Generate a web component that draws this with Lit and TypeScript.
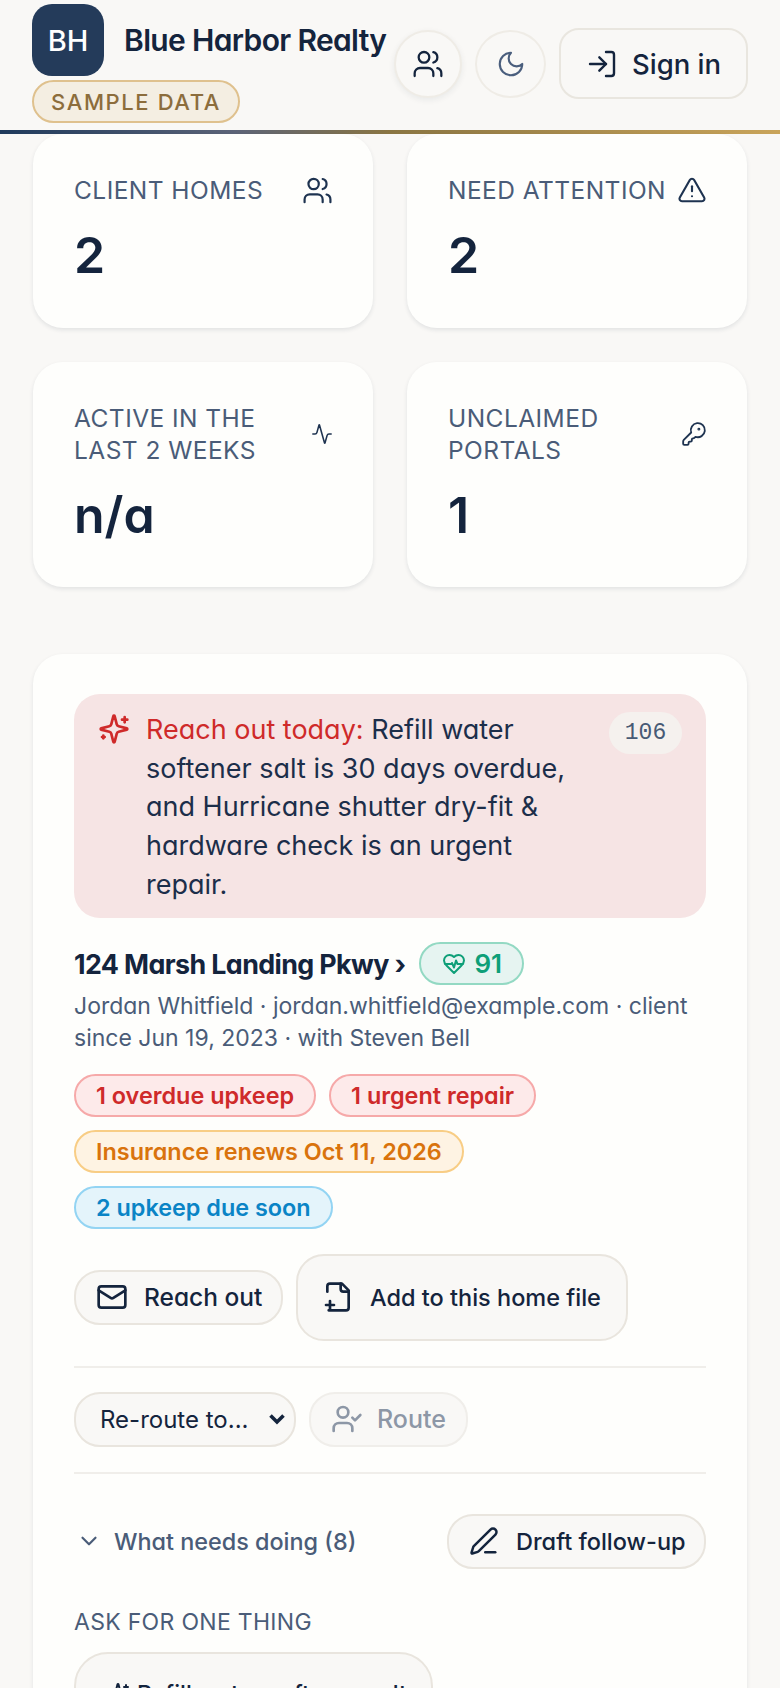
import {css, html, LitElement, svg} from 'lit'
import {customElement} from 'lit/decorators.js'

const icons: Record<string, unknown> = {
    users: svg`<path d="M16 21v-2a4 4 0 0 0-4-4H6a4 4 0 0 0-4 4v2"/><circle cx="9" cy="7" r="4"/><path d="M22 21v-2a4 4 0 0 0-3-3.87"/><path d="M16 3.13a4 4 0 0 1 0 7.75"/>`,
    moon: svg`<path d="M12 3a6 6 0 0 0 9 9 9 9 0 1 1-9-9Z"/>`,
    login: svg`<path d="M15 3h4a2 2 0 0 1 2 2v14a2 2 0 0 1-2 2h-4"/><polyline points="10 17 15 12 10 7"/><line x1="15" y1="12" x2="3" y2="12"/>`,
    alert: svg`<path d="m21.73 18-8-14a2 2 0 0 0-3.48 0l-8 14A2 2 0 0 0 4 21h16a2 2 0 0 0 1.73-3"/><path d="M12 9v4"/><path d="M12 17h.01"/>`,
    activity: svg`<path d="M22 12h-2.48a2 2 0 0 0-1.93 1.46l-2.35 8.36a.25.25 0 0 1-.48 0L9.24 2.18a.25.25 0 0 0-.48 0l-2.35 8.36A2 2 0 0 1 4.49 12H2"/>`,
    key: svg`<path d="M2.586 17.414A2 2 0 0 0 2 18.828V21a1 1 0 0 0 1 1h3a1 1 0 0 0 1-1v-1a1 1 0 0 1 1-1h1a1 1 0 0 0 1-1v-1a1 1 0 0 1 1-1h.172a2 2 0 0 0 1.414-.586l.814-.814a6.5 6.5 0 1 0-4-4z"/><circle cx="16.5" cy="7.5" r=".5" fill="currentColor"/>`,
    sparkles: svg`<path d="M9.937 15.5A2 2 0 0 0 8.5 14.063l-6.135-1.582a.5.5 0 0 1 0-.962L8.5 9.936A2 2 0 0 0 9.937 8.5l1.582-6.135a.5.5 0 0 1 .963 0L14.063 8.5A2 2 0 0 0 15.5 9.937l6.135 1.581a.5.5 0 0 1 0 .964L15.5 14.063a2 2 0 0 0-1.437 1.437l-1.582 6.135a.5.5 0 0 1-.963 0z"/><path d="M20 3v4"/><path d="M22 5h-4"/><path d="M4 17v2"/><path d="M5 18H3"/>`,
    heart: svg`<path d="M19 14c1.49-1.46 3-3.21 3-5.5A5.5 5.5 0 0 0 16.5 3c-1.76 0-3 .5-4.5 2-1.5-1.5-2.74-2-4.5-2A5.5 5.5 0 0 0 2 8.5c0 2.3 1.5 4.05 3 5.5l7 7Z"/><path d="M3.22 12H9.5l.5-1 2 4.5 2-7 1.5 3.5h5.27"/>`,
    mail: svg`<rect x="2" y="4" width="20" height="16" rx="2"/><path d="m22 7-8.97 5.7a1.94 1.94 0 0 1-2.06 0L2 7"/>`,
    filePlus: svg`<path d="M4 8V4a2 2 0 0 1 2-2h9l5 5v13a2 2 0 0 1-2 2H5"/><path d="M14 2v4a2 2 0 0 0 2 2h4"/><path d="M3 18h6"/><path d="M6 15v6"/>`,
    userCheck: svg`<path d="M16 21v-2a4 4 0 0 0-4-4H6a4 4 0 0 0-4 4v2"/><circle cx="9" cy="7" r="4"/><polyline points="16 11 18 13 22 9"/>`,
    chevron: svg`<path d="m6 9 6 6 6-6"/>`,
    pen: svg`<path d="M13 21h8"/><path d="M21.174 6.812a1 1 0 0 0-3.986-3.987L3.842 16.174a2 2 0 0 0-.5.83l-1.321 4.352a.5.5 0 0 0 .623.622l4.353-1.32a2 2 0 0 0 .83-.497z"/>`,
}

const icon = (name: string, size: number, width = 2) => html`
    <svg width=${size} height=${size} viewBox="0 0 24 24" fill="none" stroke="currentColor"
         stroke-width=${width} stroke-linecap="round" stroke-linejoin="round">${icons[name]}</svg>`

const stats = [
    {label: 'CLIENT HOMES', value: '2', icon: 'users', size: 31},
    {label: 'NEED ATTENTION', value: '2', icon: 'alert', size: 30},
    {label: 'ACTIVE IN THE LAST 2 WEEKS', value: 'n/a', icon: 'activity', size: 22},
    {label: 'UNCLAIMED PORTALS', value: '1', icon: 'key', size: 26},
]

@customElement('app-root')
export class AppRoot extends LitElement {

    render() {
        return html`
            <header class="top">
                <div class="brand">
                    <div class="brand-row">
                        <div class="logo">BH</div>
                        <div class="title">Blue Harbor Realty</div>
                    </div>
                    <span class="sample">SAMPLE DATA</span>
                </div>
                <div class="actions">
                    <button class="round shadow">${icon('users', 32, 1.7)}</button>
                    <button class="round moon">${icon('moon', 30, 1.7)}</button>
                    <button class="sign-in">${icon('login', 32, 1.8)}Sign in</button>
                </div>
            </header>
            <div class="rule"></div>

            <main>
                <section class="stats">
                    ${stats.map(s => html`
                        <div class="stat">
                            <div class="stat-head">
                                <span class="stat-label">${s.label}</span>
                                <span class="stat-icon">${icon(s.icon, s.size, 1.7)}</span>
                            </div>
                            <div class="stat-value">${s.value}</div>
                        </div>
                    `)}
                </section>

                <section class="home">
                    <div class="notice">
                        <span class="notice-icon">${icon('sparkles', 32, 2)}</span>
                        <p class="notice-text"><span class="red">Reach out today:</span> Refill water softener salt is 30 days overdue, and Hurricane shutter dry-fit &amp; hardware check is an urgent repair.</p>
                        <span class="score">106</span>
                    </div>

                    <div class="address-row">
                        <span class="address">124 Marsh Landing Pkwy ›</span>
                        <span class="health">${icon('heart', 24, 2)}91</span>
                    </div>
                    <p class="meta">Jordan Whitfield · jordan.whitfield@example.com · client since Jun 19, 2023 · with Steven Bell</p>

                    <div class="chips">
                        <span class="chip red-chip">1 overdue upkeep</span>
                        <span class="chip red-chip">1 urgent repair</span>
                        <span class="chip amber-chip">Insurance renews Oct 11, 2026</span>
                        <span class="chip blue-chip">2 upkeep due soon</span>
                    </div>

                    <div class="buttons">
                        <button class="btn reach">${icon('mail', 32, 2)}Reach out</button>
                        <button class="btn tall">${icon('filePlus', 32, 2)}Add to this home file</button>
                    </div>

                    <div class="route">
                        <select class="reroute"><option>Re-route to...</option></select>
                        <button class="btn disabled">${icon('userCheck', 32, 2)}Route</button>
                    </div>

                    <div class="todo">
                        <span class="todo-toggle">${icon('chevron', 26, 2)}What needs doing (8)</span>
                        <button class="btn draft">${icon('pen', 30, 2)}Draft follow-up</button>
                    </div>

                    <div class="ask-label">ASK FOR ONE THING</div>
                    <button class="ask">${icon('sparkles', 24, 2)}Refill water softener salt</button>
                </section>
            </main>
        `
    }

    static styles = css`
      :host {
        display: block;
        height: 1688px;
        overflow: hidden;
        background: #f9f8f6;
        color: #14243d;
        font-family: 'Inter', 'Noto Sans', sans-serif;
        font-feature-settings: 'cv11';
      }

      button, select {
        font-family: inherit;
        font-feature-settings: inherit;
      }

      svg {
        flex: none;
      }

      .top {
        display: flex;
        justify-content: space-between;
        align-items: flex-start;
        height: 130px;
        padding: 4px 32px 0;
        box-sizing: border-box;
      }

      .brand-row {
        display: flex;
        align-items: center;
        gap: 20px;
      }

      .logo {
        width: 72px;
        height: 72px;
        border-radius: 20px;
        background: #243b5a;
        color: #fff;
        display: flex;
        align-items: center;
        justify-content: center;
        font-size: 29px;
        font-weight: 500;
      }

      .title {
        font-size: 30px;
        font-weight: 600;
        letter-spacing: -0.65px;
        white-space: nowrap;
      }

      .sample {
        display: inline-block;
        margin-top: 4px;
        padding: 0 17px;
        height: 43px;
        line-height: 41px;
        box-sizing: border-box;
        border: 2px solid #dfc18e;
        border-radius: 22px;
        background: #f4eee2;
        color: #8c6d3c;
        font-size: 22px;
        font-weight: 500;
        letter-spacing: 1.6px;
      }

      .actions {
        display: flex;
        align-items: center;
        gap: 13px;
        margin-top: 24px;
        flex: none;
      }

      .round {
        width: 68px;
        height: 68px;
        border-radius: 50%;
        border: 2px solid #efece6;
        background: #f9f8f6;
        color: #14243d;
        display: flex;
        align-items: center;
        justify-content: center;
        padding: 0;
      }

      .round.shadow {
        box-shadow: 0 2px 6px rgba(20, 36, 61, .07);
      }

      .round.moon {
        width: 71px;
        color: #4a5e7d;
      }

      .sign-in {
        width: 189px;
        height: 71px;
        padding: 0;
        border: 2px solid #e9e6df;
        border-radius: 20px;
        background: #f9f8f6;
        color: #14243d;
        font-size: 27.5px;
        font-weight: 500;
        display: flex;
        align-items: center;
        justify-content: center;
        gap: 14px;
      }

      .rule {
        height: 4px;
        background: linear-gradient(90deg, #1f3a5c 0%, #5c6478 30%, #8a7542 50%, #c9a45a 100%);
      }

      main {
        padding: 0 33px;
      }

      .stats {
        display: grid;
        grid-template-columns: 1fr 1fr;
        gap: 34px;
      }

      .stat {
        background: #fefefc;
        border-radius: 30px;
        padding: 40px 40px 0 41px;
        box-shadow: 0 2px 4px rgba(20, 36, 61, .1);
        height: 194px;
        box-sizing: border-box;
      }

      .stat:nth-child(n+3) {
        height: 225px;
      }

      .stat-head {
        display: flex;
        justify-content: space-between;
        align-items: center;
        gap: 6px;
      }

      .stat-label {
        font-size: 24.5px;
        line-height: 32px;
        color: #4a5c78;
        letter-spacing: 0.45px;
        max-width: 210px;
      }

      .stat:nth-child(1) .stat-label, .stat:nth-child(2) .stat-label {
        max-width: none;
        white-space: nowrap;
      }

      .stat-icon {
        display: flex;
        color: #1e3350;
      }

      .stat-value {
        margin-top: 19px;
        font-size: 50px;
        line-height: 60px;
        font-weight: 600;
      }

      .home {
        margin-top: 67px;
        background: #fefefc;
        border-radius: 30px;
        padding: 40px 41px;
        box-shadow: 0 2px 4px rgba(20, 36, 61, .1);
      }

      .notice {
        display: flex;
        align-items: flex-start;
        background: #f6e4e4;
        border-radius: 26px;
        padding: 17px 24px 15px 24px;
        height: 224px;
        box-sizing: border-box;
      }

      .notice-icon {
        display: flex;
        color: #cf2a2a;
        margin: 2px 16px 0 0;
      }

      .notice-text {
        margin: 0;
        font-size: 27px;
        line-height: 38.7px;
        width: 420px;
        flex: none;
        color: #1c2e4a;
      }

      .red {
        color: #cf2a2a;
      }

      .score {
        margin-left: auto;
        width: 73px;
        height: 42px;
        margin-top: 1px;
        border-radius: 21px;
        background: #f5f1ee;
        color: #475a75;
        font: 23px/42px 'Liberation Mono', monospace;
        text-align: center;
        flex: none;
      }

      .address-row {
        display: flex;
        align-items: center;
        gap: 14px;
        margin-top: 24px;
      }

      .address {
        font-size: 26.8px;
        font-weight: 700;
        letter-spacing: -0.6px;
      }

      .health {
        display: flex;
        align-items: center;
        gap: 8px;
        height: 43px;
        box-sizing: border-box;
        padding: 0 20px 0 21px;
        border: 2px solid #93d9c3;
        border-radius: 22px;
        background: #e6f4f1;
        color: #0e9f78;
        font-size: 26px;
        font-weight: 600;
      }

      .meta {
        margin: 5px 0 0;
        font-size: 23px;
        line-height: 32.3px;
        color: #4a5c78;
      }

      .chips {
        display: flex;
        flex-wrap: wrap;
        gap: 13px;
        margin-top: 19px;
      }

      .chip {
        height: 43px;
        line-height: 39px;
        box-sizing: border-box;
        padding: 0 20px;
        border: 2px solid;
        border-radius: 22px;
        font-size: 23.4px;
        font-weight: 600;
      }

      .red-chip {
        background: #fdeaea;
        border-color: #f6a9a9;
        color: #cf2a2a;
      }

      .amber-chip {
        background: #fef3e3;
        border-color: #f8cd85;
        color: #d9730d;
      }

      .blue-chip {
        background: #e4f4fb;
        border-color: #93d4f3;
        color: #0a84c6;
      }

      .buttons {
        display: flex;
        align-items: center;
        gap: 13px;
        margin-top: 25px;
        padding-bottom: 25px;
        border-bottom: 2px solid #f0eeea;
      }

      .btn {
        display: inline-flex;
        align-items: center;
        gap: 14px;
        height: 55px;
        padding: 0 20px;
        border: 2px solid #e9e5de;
        border-radius: 26px;
        background: #f9f8f6;
        color: #14243d;
        font-size: 23.5px;
        font-weight: 500;
        white-space: nowrap;
      }

      .btn.reach {
        width: 209px;
        gap: 16px;
        font-size: 24.5px;
      }

      .btn.tall {
        width: 332px;
        height: 87px;
        border-radius: 28px;
        padding: 0 0 0 24px;
        gap: 16px;
      }

      .btn.draft {
        width: 259px;
        gap: 17px;
      }

      .route {
        display: flex;
        gap: 13px;
        padding: 24px 0 25px;
        border-bottom: 2px solid #f0eeea;
      }

      .reroute {
        appearance: none;
        width: 222px;
        height: 55px;
        padding: 0 0 0 24px;
        border: 2px solid #e9e5de;
        border-radius: 26px;
        background: #f9f8f6 url("data:image/svg+xml,%3Csvg xmlns='http://www.w3.org/2000/svg' viewBox='0 0 18 12'%3E%3Cpath d='M2.5 2.5 9 9l6.5-6.5' fill='none' stroke='%2314243d' stroke-width='3.6'/%3E%3C/svg%3E") no-repeat right 8px center / 18px 12px;
        color: #14243d;
        font-size: 24px;
      }

      .btn.disabled {
        color: #8d97a6;
        border-color: #f0eeea;
        font-size: 25px;
      }

      .todo {
        display: flex;
        align-items: center;
        justify-content: space-between;
        margin-top: 40px;
      }

      .todo-toggle {
        display: flex;
        align-items: center;
        gap: 12px;
        padding-left: 2px;
        font-size: 23.4px;
        font-weight: 500;
        color: #4a5c78;
      }

      .ask-label {
        margin-top: 40px;
        font-size: 23px;
        line-height: 26px;
        color: #4a5c78;
        letter-spacing: 0.3px;
      }

      .ask {
        display: inline-flex;
        align-items: center;
        gap: 7px;
        margin-top: 17px;
        width: 359px;
        height: 84px;
        padding: 0 0 0 30px;
        border: 2px solid #e9e5de;
        border-radius: 34px;
        background: #f9f8f6;
        color: #14243d;
        font-size: 23.2px;
        font-weight: 500;
        white-space: nowrap;
      }
    `
}

declare global {
    interface HTMLElementTagNameMap {
        'app-root': AppRoot
    }
}
